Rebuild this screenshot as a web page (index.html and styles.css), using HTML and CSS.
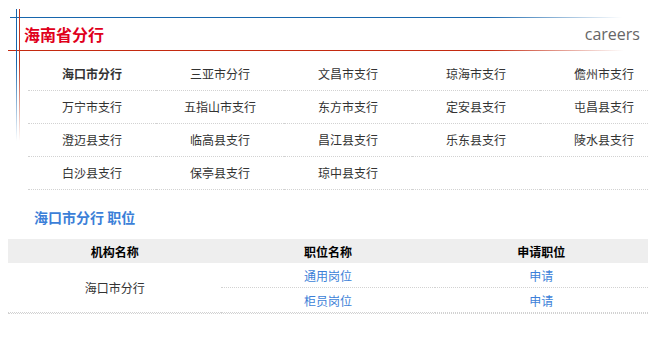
FILE: index.html
```html
<!DOCTYPE html>
<html>
<head>
<meta charset="utf-8">
<title>海南省分行 careers</title>
<link rel="stylesheet" href="styles.css">
</head>
<body>
<div class="frame">

<div class="head">
<span class="head-title">海南省分行</span>
<span class="head-en">careers</span>
</div>

<div class="branches">
<ul class="branch-list">
<li class="current"><a href="#">海口市分行</a></li>
<li><a href="#">三亚市分行</a></li>
<li><a href="#">文昌市支行</a></li>
<li><a href="#">琼海市支行</a></li>
<li><a href="#">儋州市支行</a></li>
<li><a href="#">万宁市支行</a></li>
<li><a href="#">五指山市支行</a></li>
<li><a href="#">东方市支行</a></li>
<li><a href="#">定安县支行</a></li>
<li><a href="#">屯昌县支行</a></li>
<li><a href="#">澄迈县支行</a></li>
<li><a href="#">临高县支行</a></li>
<li><a href="#">昌江县支行</a></li>
<li><a href="#">乐东县支行</a></li>
<li><a href="#">陵水县支行</a></li>
<li><a href="#">白沙县支行</a></li>
<li><a href="#">保亭县支行</a></li>
<li><a href="#">琼中县支行</a></li>
<li></li>
<li></li>
</ul>
</div>

<h2 class="jobs-title">海口市分行 职位</h2>

<div class="jobs">
<table class="jobs-table">
<tr>
<th>机构名称</th>
<th>职位名称</th>
<th>申请职位</th>
</tr>
<tr>
<td rowspan="2" class="org">海口市分行</td>
<td><a href="#">通用岗位</a></td>
<td><a href="#">申请</a></td>
</tr>
<tr>
<td><a href="#">柜员岗位</a></td>
<td><a href="#">申请</a></td>
</tr>
</table>
</div>

</div>
</body>
</html>
```

FILE: styles.css
```css
/* careers page, province branch list */

body
{ margin: 0;
background: #fff;
font-family: "Noto Sans CJK SC", "Noto Sans", sans-serif;
font-size: 12px;
color: #333;
}

a
{ text-decoration: none;
}

/* frame lines: blue and red, fading out */
div.frame
{ width: 666px;
height: 338px;
padding-top: 18px;
box-sizing: border-box;
background-image:
  linear-gradient(to bottom, #1766ad 40%, rgba(23,102,173,0)),
  linear-gradient(to bottom, #c1381f 40%, rgba(193,56,31,0)),
  linear-gradient(to right, #1766ad 78%, rgba(23,102,173,0)),
  linear-gradient(to right, #c42a10 78%, rgba(196,42,16,0));
background-size: 1px 132px, 1px 132px, 612px 1px, 616px 1px;
background-position: 16px 9px, 19px 9px, 10px 17px, 8px 50px;
background-repeat: no-repeat;
}

div.head
{ display: flex;
align-items: center;
justify-content: space-between;
height: 32px;
padding-left: 24px;
padding-right: 26px;
}

span.head-title
{ font-size: 16px;
font-weight: bold;
color: #e0001b;
}

span.head-en
{ font-family: "Open Sans", sans-serif;
font-size: 16px;
color: #666;
}

div.branches
{ width: 620px;
margin-top: 8px;
margin-left: 28px;
overflow: hidden;
}

ul.branch-list
{ display: grid;
grid-template-columns: repeat(5, 128px);
margin: 0;
padding: 0;
list-style: none;
}

ul.branch-list li
{ height: 32px;
line-height: 32px;
text-align: center;
border-bottom: 1px dotted #d2d2d2;
}

ul.branch-list a
{ color: #333;
}

ul.branch-list li.current a
{ font-weight: bold;
}

h2.jobs-title
{ margin: 17px 0 0 34px;
height: 20px;
line-height: 20px;
font-size: 14px;
color: #3c7fd8;
}

div.jobs
{ width: 640px;
margin: 12px 0 0 8px;
border-bottom: 1px dotted #d2d2d2;
}

table.jobs-table
{ width: 100%;
table-layout: fixed;
border-collapse: collapse;
}

table.jobs-table th
{ height: 24px;
padding: 0;
background: #eee;
font-weight: bold;
color: #000;
}

table.jobs-table td
{ height: 24px;
padding: 0;
text-align: center;
border-bottom: 1px dotted #d2d2d2;
}

table.jobs-table td a
{ color: #3c7fd8;
}
```
